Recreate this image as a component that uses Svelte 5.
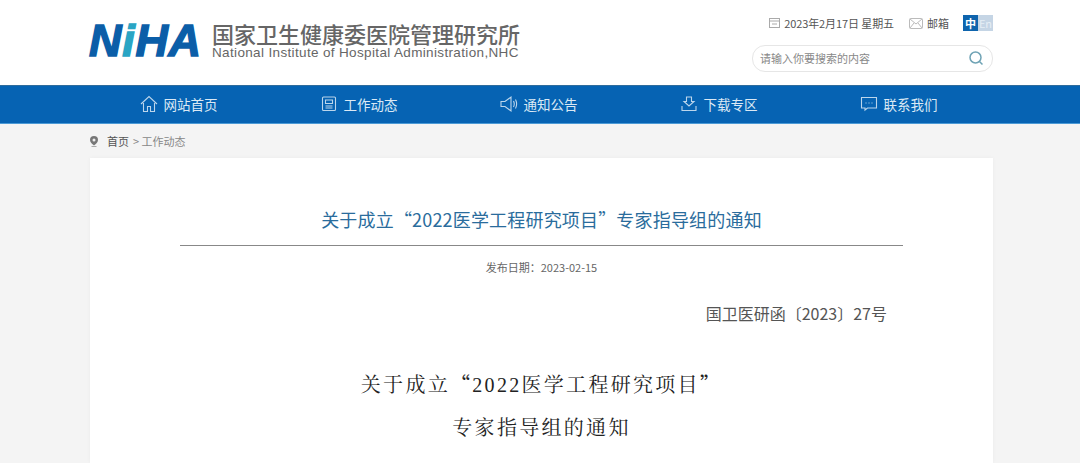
<script lang="ts">
  const nav = [
    { label: "网站首页", icon: "home" },
    { label: "工作动态", icon: "news" },
    { label: "通知公告", icon: "sound" },
    { label: "下载专区", icon: "down" },
    { label: "联系我们", icon: "chat" }
  ];
</script>

<div class="page">
  <header class="top">
    <div class="wrap top-in">
      <div class="logo">
        <span class="mark">N<span class="mark-i">i</span>HA</span>
        <div class="org">
          <div class="org-cn">国家卫生健康委医院管理研究所</div>
          <div class="org-en">National Institute of Hospital Administration,NHC</div>
        </div>
      </div>
      <div class="tools">
        <div class="tool-row">
          <svg class="ic-date" width="11" height="10" viewBox="0 0 11 10" fill="none" stroke="#aaa"><rect x=".5" y=".5" width="10" height="9"/><path d="M.5 3h10M3 6h5"/></svg>
          <span class="date">2023年2月17日 星期五</span>
          <svg class="ic-mail" width="14" height="11" viewBox="0 0 14 11" fill="none" stroke="#bbb"><rect x=".5" y=".5" width="13" height="10" rx="1"/><path d="M1 1l6 5 6-5M1 10l4-5M13 10L9 5"/></svg>
          <span class="mail">邮箱</span>
          <div class="lang"><span class="zh">中</span><span class="en">En</span></div>
        </div>
        <div class="search">
          <span>请输入你要搜索的内容</span>
          <svg width="16" height="16" viewBox="0 0 16 16" fill="none" stroke="#6fa3b5" stroke-width="1.5"><circle cx="7.5" cy="7.5" r="5.5"/><path d="M11.5 11.5l3 3"/></svg>
        </div>
      </div>
    </div>
  </header>

  <nav class="nav">
    <div class="nav-in">
      {#each nav as item}
        <div class="nav-item">
          <svg width="18" height="18" viewBox="0 0 18 18" fill="none" stroke="#bcd6ec" stroke-width="1.1">
            {#if item.icon === "home"}
              <path d="M1 9l8-7.500 8 7.500M3.500 8v8.500h4v-5h3v5h4V8"/>
            {:else if item.icon === "news"}
              <rect x="2.500" y="2" width="13" height="13.500" rx="1"/><path d="M5.500 5h7v3.500h-7zM5.500 11h7M5.500 13h7"/>
            {:else if item.icon === "sound"}
              <path d="M1 6.500h4l6-4.500v14l-6-4.500H1zM13.500 6c1 2 1 4 0 6M15.500 4.500c1.500 3 1.500 6 0 9"/>
            {:else if item.icon === "down"}
              <path d="M6.500 2h5v4.500h2.500L9 11 4 6.500h2.500zM2 11v4.500h14V11"/>
            {:else}
              <path d="M1.500 2.500h15v10.500h-9L5 15v-2H1.500z"/><path d="M5.500 8h1M8.500 8h1M11.500 8h1"/>
            {/if}
          </svg>
          <span>{item.label}</span>
        </div>
      {/each}
    </div>
  </nav>

  <div class="wrap crumb">
    <svg width="8" height="11" viewBox="0 0 8 11"><path d="M4 0a4 4 0 0 1 4 4c0 2-2 4-4 5.500C2 8 0 6 0 4a4 4 0 0 1 4-4z" fill="#777"/><circle cx="4" cy="4" r="1.500" fill="#eee"/><rect x="1.500" y="10" width="5" height="1" fill="#aaa"/></svg>
    <span class="home">首页</span>
    <span class="rest">&gt; 工作动态</span>
  </div>

  <main class="wrap card">
    <h1 class="title">关于成立“2022医学工程研究项目”专家指导组的通知</h1>
    <div class="pubdate">发布日期：2023-02-15</div>
    <p class="docno">国卫医研函〔2023〕27号</p>
    <h2 class="head">关于成立<span class="q">“</span>2022医学工程研究项目<span class="q">”</span></h2>
    <h2 class="head second">专家指导组的通知</h2>
  </main>
</div>

<style>
  :global(body) {
    margin: 0;
    background: #f4f4f4;
  }

  .page {
    height: 463px;
    overflow: hidden;
    font-family: "Noto Sans CJK SC", "Liberation Sans", sans-serif;
  }

  .wrap {
    width: 903px;
    margin-left: 90px;
  }

  .top {
    height: 85px;
    background: #fff;
  }

  .top-in {
    display: flex;
    justify-content: space-between;
  }

  .logo {
    display: flex;
    align-items: center;
    height: 85px;
    padding-bottom: 5px;
    box-sizing: border-box;
  }

  .mark {
    width: 111px;
    margin-left: -1px;
    font: italic 700 45px/1 "Liberation Sans", sans-serif;
    letter-spacing: 0.7px;
    color: #0b5ea8;
    -webkit-text-stroke: 1.5px #0b5ea8;
  }

  .mark-i {
    color: #2aa5c4;
    -webkit-text-stroke: 1.5px #2aa5c4;
  }

  .org {
    margin-left: 12px;
    color: #666;
  }

  .org-cn {
    font-size: 22px;
    line-height: 25px;
    font-weight: 500;
    white-space: nowrap;
  }

  .org-en {
    font: 13.5px/14px "Liberation Sans", sans-serif;
    letter-spacing: 0.35px;
    white-space: nowrap;
  }

  .tools {
    width: 241px;
    padding-top: 15px;
  }

  .tool-row {
    display: flex;
    align-items: center;
    justify-content: flex-end;
    height: 16px;
    font-size: 11px;
    color: #555;
  }

  .date {
    margin-left: 4px;
    letter-spacing: -0.1px;
  }

  .ic-mail {
    margin-left: 15px;
  }

  .mail {
    margin-left: 4px;
  }

  .lang {
    display: flex;
    margin-left: 14px;
  }

  .lang span {
    width: 15px;
    height: 16px;
    line-height: 16px;
    text-align: center;
    font-size: 11px;
  }

  .zh {
    background: #0e64ad;
    color: #fff;
    font-weight: 700;
  }

  .en {
    background: #c5d5e5;
    color: #e6eef5;
  }

  .search {
    display: flex;
    align-items: center;
    justify-content: space-between;
    height: 23px;
    margin-top: 14px;
    padding: 0 8px 2px 7px;
    border: 1px solid #e6e6e6;
    border-radius: 13px;
    font-size: 11px;
    color: #888;
  }

  .nav {
    height: 39px;
    background: #0663b3;
    border-top: 1px solid #2f6c9c;
    border-bottom: 1px solid #4b9ad6;
    box-sizing: border-box;
  }

  .nav-in {
    display: grid;
    grid-template-columns: repeat(5, 180px);
    width: 900px;
    margin-left: 88.5px;
  }

  .nav-item {
    display: flex;
    align-items: center;
    justify-content: center;
    gap: 6px;
    height: 36px;
    font-size: 13.500px;
    color: #dbe9f5;
  }

  .crumb {
    display: flex;
    align-items: center;
    height: 34px;
    font-size: 11px;
  }

  .home {
    margin-left: 9px;
    color: #555;
  }

  .rest {
    margin-left: 4px;
    color: #888;
  }

  .card {
    height: 305px;
    background: #fff;
    box-shadow: 0 0 4px rgba(0, 0, 0, 0.04);
    overflow: hidden;
  }

  .title {
    margin: 47px 90px 0;
    padding-bottom: 11px;
    border-bottom: 1px solid #888;
    font-size: 18px;
    line-height: 29px;
    font-weight: 400;
    letter-spacing: 0.18px;
    text-align: center;
    color: #2a6c9c;
  }

  .pubdate {
    margin-top: 13px;
    font-size: 11px;
    line-height: 17px;
    text-align: center;
    color: #666;
  }

  .docno {
    margin: 25px 106px 0 0;
    font-size: 16px;
    line-height: 24px;
    text-align: right;
    color: #555;
  }

  .head {
    margin: 45px 0 0;
    font-family: "Liberation Serif", "Noto Serif CJK SC", "Noto Sans CJK SC", serif;
    font-size: 20px;
    line-height: 28px;
    font-weight: 400;
    letter-spacing: 2.3px;
    text-align: center;
    color: #222;
  }

  .q {
    font-family: "Noto Sans CJK SC", sans-serif;
  }

  .second {
    margin-top: 15px;
  }
</style>
